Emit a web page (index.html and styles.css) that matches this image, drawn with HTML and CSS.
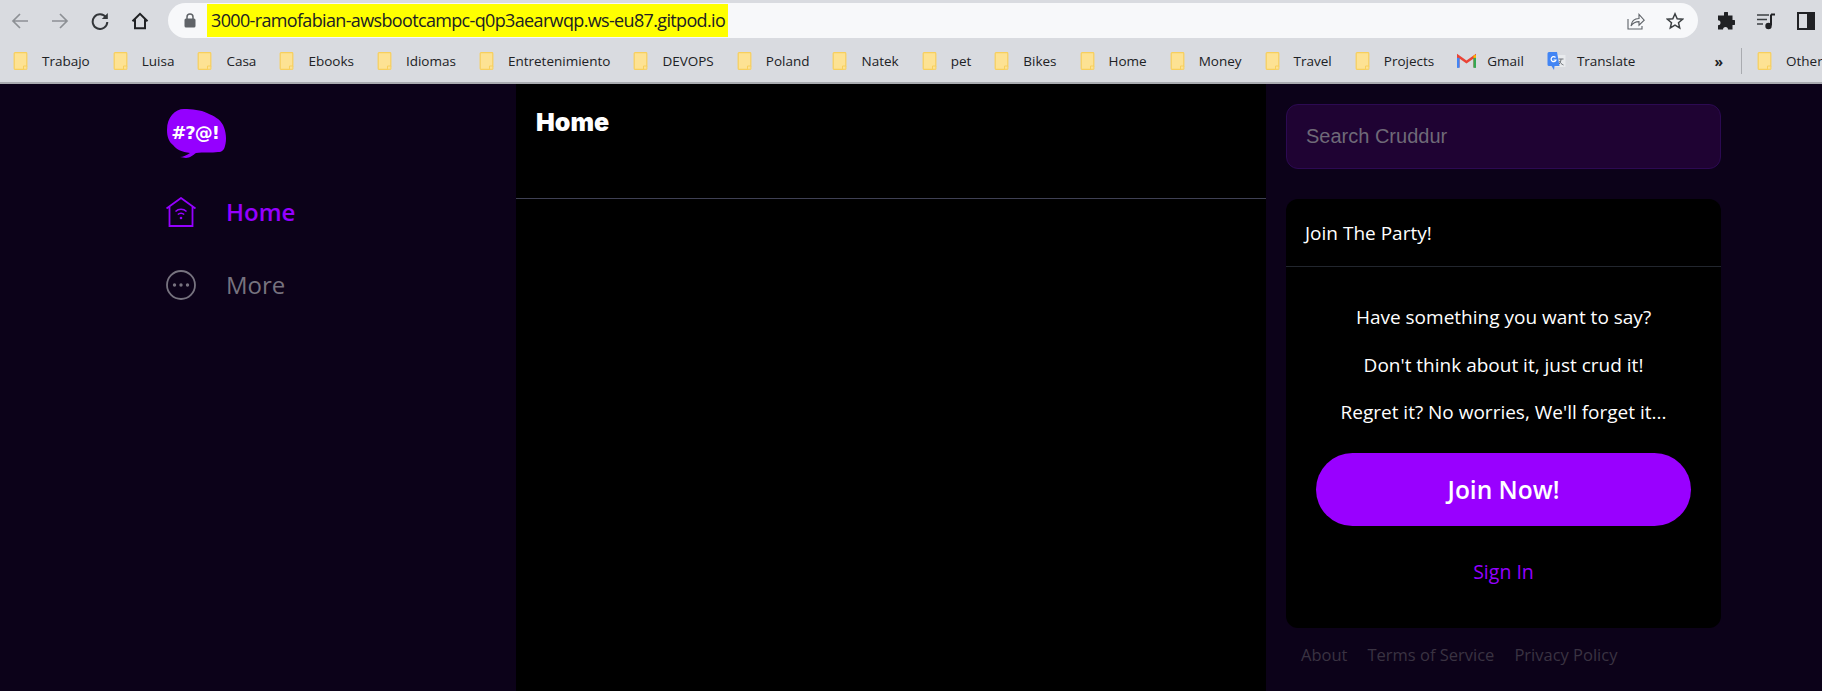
FILE: index.html
```html
<!doctype html>
<html>
<head>
<meta charset="utf-8">
<title>Cruddur</title>
<link rel="stylesheet" href="styles.css">
</head>

<body>
	<svg class="defs" width="0" height="0">
		<symbol id="folder" viewBox="0 0 14 18">
			<path d="M1.5 .7h11a.8.8 0 0 1 .8.8v12.6l-3.200 3.200h-8.600a.8.8 0 0 1-.8-.8v-15a.8.8 0 0 1 .8-.8z" fill="#fde293" stroke="#f8cf5c" stroke-width="1.200"/>
			<path d="M10 14h3.400v3.300h-3.400z" fill="#fde293" stroke="#f8cf5c" stroke-width="1"/>
		</symbol>
	</svg>

	<div class="toolbar">
		<div class="tool-btn">
			<svg width="18" height="18" viewBox="0 0 18 18"><path d="M17 9H2M9 2L2 9l7 7" fill="none" stroke="#8d9095" stroke-width="1.700"/></svg>
		</div>
		<div class="tool-btn">
			<svg width="18" height="18" viewBox="0 0 18 18"><path d="M1 9h15M9 2l7 7-7 7" fill="none" stroke="#8d9095" stroke-width="1.700"/></svg>
		</div>
		<div class="tool-btn">
			<svg width="18" height="18" viewBox="0 0 18 18"><path d="M15 5.500A7.300 7.300 0 1 0 16.300 10" fill="none" stroke="#33363a" stroke-width="2"/><path d="M16.800 1v6h-6z" fill="#33363a"/></svg>
		</div>
		<div class="tool-btn">
			<svg width="18" height="18" viewBox="0 0 18 18"><path d="M1.500 9.200L9 1.800l7.500 7.400M4 7.500v8.700h10V7.500" fill="none" stroke="#202124" stroke-width="2"/></svg>
		</div>
		<div class="omnibox">
			<svg class="lock" width="12" height="15" viewBox="0 0 12 15"><path d="M3 6V4a3 3 0 0 1 6 0v2" fill="none" stroke="#5f6368" stroke-width="1.500"/><rect x="0.500" y="5.500" width="11" height="9" rx="1.500" fill="#5f6368"/></svg>
			<span class="url">3000-ramofabian-awsbootcampc-q0p3aearwqp.ws-eu87.gitpod.io</span>
			<svg class="share" width="18" height="18" viewBox="0 0 18 18"><path d="M1 7v10h14v-3" fill="none" stroke="#5f6368" stroke-width="1.100"/><path d="M4 14c.5-4.500 3.500-7.500 8-7.500V2.500l5.200 5.700-5.200 5v-3.600c-3.500 0-6 1.200-8 4.400z" fill="none" stroke="#5f6368" stroke-width="1.100"/></svg>
			<svg class="star" width="18" height="18" viewBox="0 0 18 18"><path d="M9 1.800l2.200 4.900 5.300.5-4 3.500 1.200 5.200L9 13.200l-4.700 2.700 1.200-5.200-4-3.500 5.300-.5z" fill="none" stroke="#3c4043" stroke-width="1.500"/></svg>
		</div>
		<div class="tool-btn">
			<svg width="18" height="18" viewBox="0 0 18 18"><path d="M7 1a2 2 0 0 1 4 0.500V3.500h4.500V8h1.500a2.500 2.500 0 0 1 0 5h-1.500v4.500h-4.500a2.500 2.500 0 0 0-5 0H1v-4.300a2.500 2.500 0 0 0 0-5V3.500h6z" fill="#202124"/></svg>
		</div>
		<div class="tool-btn">
			<svg width="20" height="18" viewBox="0 0 20 18"><path d="M1 3h12M1 7.500h10M1 12h6" fill="none" stroke="#3c4043" stroke-width="1.600"/><path d="M15 2.500h4M15 2.500v11" fill="none" stroke="#202124" stroke-width="2"/><circle cx="12.500" cy="14" r="3.200" fill="#202124"/></svg>
		</div>
		<div class="tool-btn">
			<svg width="18" height="18" viewBox="0 0 18 18"><rect x="1" y="1" width="16" height="16" fill="none" stroke="#202124" stroke-width="2"/><rect x="10" y="1" width="7" height="16" fill="#202124"/></svg>
		</div>
	</div>

	<div class="bookmarks">
		<a class="mark"><svg class="folder"><use href="#folder"/></svg>Trabajo</a>
		<a class="mark"><svg class="folder"><use href="#folder"/></svg>Luisa</a>
		<a class="mark"><svg class="folder"><use href="#folder"/></svg>Casa</a>
		<a class="mark"><svg class="folder"><use href="#folder"/></svg>Ebooks</a>
		<a class="mark"><svg class="folder"><use href="#folder"/></svg>Idiomas</a>
		<a class="mark"><svg class="folder"><use href="#folder"/></svg>Entretenimiento</a>
		<a class="mark"><svg class="folder"><use href="#folder"/></svg>DEVOPS</a>
		<a class="mark"><svg class="folder"><use href="#folder"/></svg>Poland</a>
		<a class="mark"><svg class="folder"><use href="#folder"/></svg>Natek</a>
		<a class="mark"><svg class="folder"><use href="#folder"/></svg>pet</a>
		<a class="mark"><svg class="folder"><use href="#folder"/></svg>Bikes</a>
		<a class="mark"><svg class="folder"><use href="#folder"/></svg>Home</a>
		<a class="mark"><svg class="folder"><use href="#folder"/></svg>Money</a>
		<a class="mark"><svg class="folder"><use href="#folder"/></svg>Travel</a>
		<a class="mark"><svg class="folder"><use href="#folder"/></svg>Projects</a>
		<a class="mark">
			<svg class="site-icon" viewBox="0 0 18 14"><path d="M1.200 13V2.500L9 8l7.800-5.500V13" fill="none" stroke="#ea4335" stroke-width="2.400"/><path d="M1.200 13.500V4" stroke="#4285f4" stroke-width="2.400"/><path d="M16.800 13.500V4" stroke="#34a853" stroke-width="2.400"/><path d="M16.800 1.500V4" stroke="#fbbc04" stroke-width="2.400"/></svg>Gmail
		</a>
		<a class="mark">
			<svg class="site-icon" viewBox="0 0 18 18"><rect x="8" y="3" width="10" height="12" fill="#e8eaed"/><path d="M11 7h5M13.500 7c0 3-1.500 5-3 6M12 9c.8 2 2 3.200 4 4" fill="none" stroke="#70757a" stroke-width="1"/><path d="M1.500 0h8l2.500 14H7l-.5 4L4 14H1.500A1.500 1.500 0 0 1 0 12.500v-11A1.500 1.500 0 0 1 1.500 0z" fill="#4285f4"/><path d="M8 5.500a2.500 2.500 0 1 0 .5 2.500H6" fill="none" stroke="#fff" stroke-width="1.200"/></svg>Translate
		</a>
		<span class="more-marks">»</span>
		<a class="mark mark-other"><svg class="folder"><use href="#folder"/></svg>Other</a>
	</div>

	<div class="app">
		<nav class="sidebar">
			<svg class="logo" width="60" height="51" viewBox="0 0 60 51">
				<path d="M0 21C0 8 8 0 17 0c8 0 17 1 23 4 7 3 13 6 16 12 3 6 4 15 2 21-1 4-3 6-7 6-6 1-15 0-22 1-3 2-6 5-10 5l-6-1c3 0 7-2 10-4-8-1-13-3-17-8C2 33 0 28 0 21z" fill="#9500ff"/>
				<text x="28" y="30" class="logo-text">#?@!</text>
			</svg>
			<a class="nav-item nav-active">
				<svg width="30" height="30" viewBox="0 0 30 30"><path d="M.5 11.500L15 1l14.500 10.500M3.500 10v19h23V10" fill="none" stroke="#9500ff" stroke-width="1.800"/><path d="M9.500 14.500a8 8 0 0 1 11 0M11.800 17.500a4.500 4.500 0 0 1 6.400 0" fill="none" stroke="#9500ff" stroke-width="1.500"/><circle cx="15" cy="21" r="1.300" fill="#9500ff"/></svg>
				<span>Home</span>
			</a>
			<a class="nav-item">
				<svg width="30" height="30" viewBox="0 0 30 30"><circle cx="15" cy="15" r="14" fill="none" stroke="#77737f" stroke-width="1.800"/><circle cx="8.500" cy="15" r="1.700" fill="#77737f"/><circle cx="15" cy="15" r="1.700" fill="#77737f"/><circle cx="21.500" cy="15" r="1.700" fill="#77737f"/></svg>
				<span>More</span>
			</a>
		</nav>

		<main class="feed">
			<div class="feed-head">Home</div>
		</main>

		<aside class="side">
			<input class="search" type="text" placeholder="Search Cruddur">
			<div class="card">
				<div class="card-head">Join The Party!</div>
				<div class="card-body">
					<p>Have something you want to say?</p>
					<p>Don't think about it, just crud it!</p>
					<p>Regret it? No worries, We'll forget it...</p>
					<a class="join">Join Now!</a>
					<a class="signin">Sign In</a>
				</div>
			</div>
			<div class="links">
				<a>About</a>
				<a>Terms of Service</a>
				<a>Privacy Policy</a>
			</div>
		</aside>
	</div>
</body>
</html>
```

FILE: styles.css
```css
*{margin:0; padding:0; box-sizing:border-box;}
html,body{height:100%; overflow:hidden;}
body{display:flex; flex-direction:column; background:#0c0219; font-family:"Open Sans","Noto Sans",sans-serif;}
.defs{position:absolute;}

.toolbar{display:flex; align-items:center; height:42px; padding-bottom:1px; background:#d9dbe0; overflow:hidden; flex:none;}
.tool-btn{width:40px; height:35px; flex:none; display:flex; align-items:center; justify-content:center;}
.omnibox{width:1530px; height:35px; margin:0 8px; flex:none; display:flex; align-items:center; border-radius:18px; background:#f7f8fa; padding-left:16px;}
.lock{flex:none; margin-right:11px;}
.url{background:#ffff00; height:33px; line-height:33px; padding:0 3px 0 4px; font-size:18px; color:#202124; letter-spacing:-.65px;}
.share{margin-left:auto;}
.star{margin:0 14px 0 21px;}

.bookmarks{display:flex; align-items:center; height:42px; padding:0 0 2px 13px; background:#d9dbe0; border-bottom:2px solid #a9abb0; overflow:hidden; flex:none;}
.mark{display:flex; align-items:center; flex:none; margin-right:23px; font-size:13.5px; color:#202124;}
.folder{width:15px; height:18px; margin-right:14px; flex:none;}
.site-icon{width:19px; height:18px; margin-right:11px; flex:none;}
.more-marks{margin-left:auto; margin-right:18px; font-size:14px; font-weight:700; color:#202124;}
.mark-other{margin-right:0; width:81px; padding-left:15px; border-left:1px solid #a9abb0; height:26px;}

.app{flex:1; display:grid; grid-template-columns:516px 750px 556px; min-height:0;}

.sidebar{padding:25px 0 0 167px;}
.logo{display:block; margin-bottom:37px;}
.logo-text{font-family:"DejaVu Sans",sans-serif; font-size:18px; font-weight:700; fill:#fff; text-anchor:middle; letter-spacing:-1px;}
.nav-item{display:flex; align-items:center; gap:30px; height:30px; margin:0 0 43px -1px; font-size:24px; color:#77737f;}
.nav-item span{margin-top:-2px;}
.nav-active{color:#9500ff; font-weight:600;}

.feed{background:#000;}
.feed-head{height:115px; padding:24px 20px; border-bottom:1px solid #3f4054; font-family:Inter,sans-serif; font-size:25px; line-height:29px; font-weight:900; color:#fff;}

.side{padding:20px 101px 0 20px;}
.search{display:block; width:100%; height:65px; margin-bottom:30px; padding:0 19px; border:1px solid #2c0a52; border-radius:12px; outline:none; background:#1f0333; font-family:"Liberation Sans",sans-serif; font-size:20px; color:#fff;}
.search::placeholder{color:#6f6a78; opacity:1;}
.card{height:429px; border-radius:12px; background:#000; color:#fff;}
.card-head{height:68px; padding-left:19px; border-bottom:1px solid #22262e; font-size:19px; line-height:68px;}
.card-body{display:flex; flex-direction:column; align-items:center; padding:27px 30px 0;}
.card-body p{height:47.500px; line-height:47px; font-size:19px; white-space:nowrap;}
.join{width:375px; height:73px; margin-top:16px; border-radius:37px; background:#9900ff; font-size:24.500px; font-weight:600; line-height:73px; text-align:center; color:#fff;}
.signin{margin-top:33px; font-size:19.500px; line-height:26px; color:#9500ff;}
.links{display:flex; gap:20px; padding:14px 0 0 15px; font-size:16.500px; line-height:26px; color:#3a3342;}
```
